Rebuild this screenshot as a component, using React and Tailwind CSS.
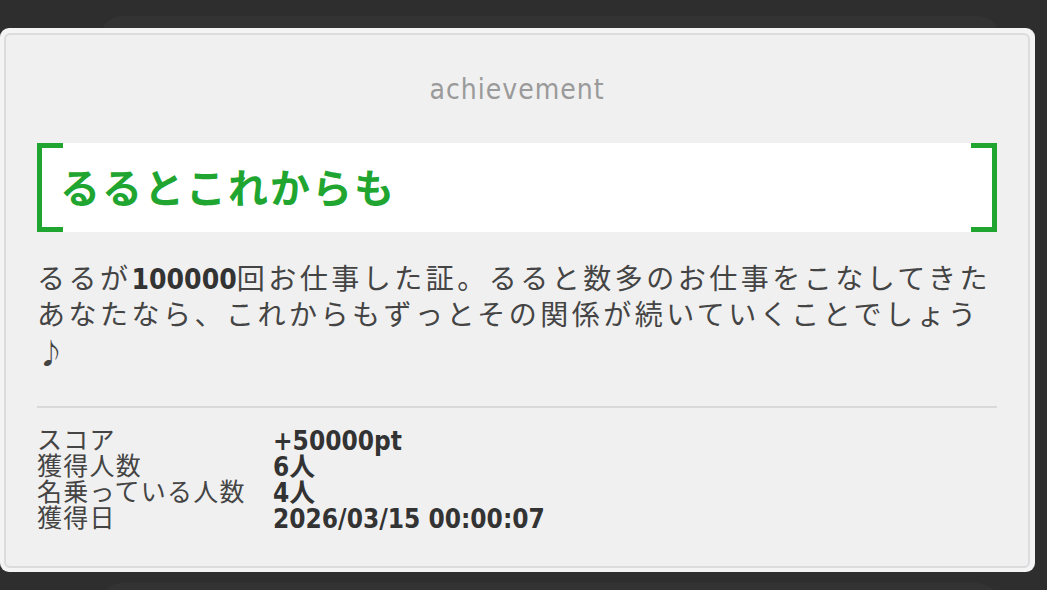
export default function App() {
  const stats = [
    ['スコア', '+50000pt'],
    ['獲得人数', '6人'],
    ['名乗っている人数', '4人'],
    ['獲得日', '2026/03/15 00:00:07'],
  ]

  return (
    <div className="relative h-[590px] w-[1047px] overflow-hidden bg-[#2e2e2e] font-['DejaVu_Sans_Condensed','Noto_Sans_CJK_JP',sans-serif]">
      {/* stacked cards behind */}
      <div className="absolute left-[100px] top-[16px] h-[80px] w-[900px] rounded-[22px] bg-[#333333]" />
      <div className="absolute left-[100px] top-[583px] h-[80px] w-[900px] rounded-[22px] bg-[#333333]" />

      <div className="relative mt-[28px] h-[544px] w-[1035px] rounded-[9px] bg-[#f4f4f5] pb-[4px] pl-[4px] pr-[5px] pt-[5px]">
        <div className="flex h-full flex-col rounded-[6px] border-2 border-[#dcdcdf] bg-[#f0f0f0] px-[31px]">
          <div className="mt-[40px] text-center text-[28px] leading-[30px] tracking-[1px] text-[#9a9a9a]">
            achievement
          </div>

          <div className="relative mt-[38px] flex h-[89px] items-center bg-white pl-[23px]">
            <span className="absolute left-0 top-0 h-full w-[26px] border-y-[5px] border-l-[5px] border-[#20a630]" />
            <span className="absolute right-0 top-0 h-full w-[26px] border-y-[5px] border-r-[5px] border-[#20a630]" />
            <h2 className="-mt-[4px] font-['Noto_Sans_CJK_JP',sans-serif] text-[40px] font-bold leading-none tracking-[2px] text-[#20a630]">
              るるとこれからも
            </h2>
          </div>

          <p className="mt-[30px] text-[28px] leading-[36px] tracking-[3.5px] text-[#444444]">
            るるが<b className="font-bold tracking-[0px] text-[#333333]">100000</b>回お仕事した証。るると数多のお仕事をこなしてきたあなたなら、これからもずっとその関係が続いていくことでしょう<span className="font-['Noto_Sans_CJK_JP',sans-serif]">♪</span>
          </p>

          <div className="mt-[33px] h-[2px] bg-[#d9d9d9]" />

          <div className="mt-[20px] grid grid-cols-[236px_1fr] text-[25px] leading-[26px]">
            {stats.map(([label, value]) => (
              <div key={label} className="contents">
                <span className="tracking-[1.25px] text-[#444444]">{label}</span>
                <span className="text-[26px] font-bold text-[#333333]">{value}</span>
              </div>
            ))}
          </div>
        </div>
      </div>
    </div>
  )
}
